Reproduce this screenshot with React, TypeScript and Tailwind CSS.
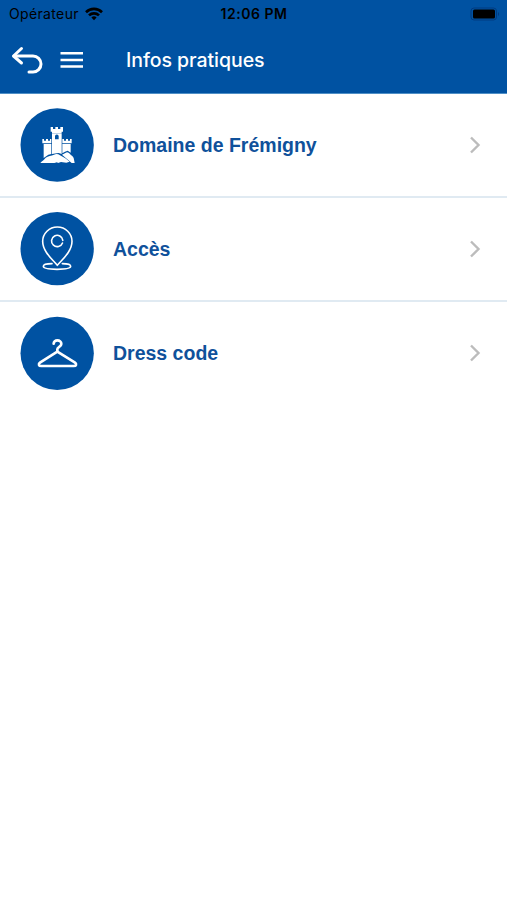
import type { ReactNode } from 'react';

interface MenuItem {
  label: string;
  icon: ReactNode;
}

const CastleIcon = () => (
  <svg viewBox="15 24 222 222" className="w-[74px] h-[74px] shrink-0" fill="#fff">
    <circle cx="126.5" cy="135" r="110" fill="#0052a2" />
    {/* Keep */}
    <path d="M107 81h7v6h7v-6h8v6h7v-6h8v14h-4v6h-29v-6h-4z" />
    <path fillRule="evenodd" d="M111 102h29v60l-9-3-6 1-14 2zM120 118h11v-9a5.5 5.5 0 0 0-11 0z" />
    {/* Side towers */}
    <path d="M82 117h5v5h6v-5h6v5h6v-5h4v13h-27zM86 132h23v30l-9 2-14 10z" />
    <path d="M142 117h5v5h6v-5h6v5h6v-5h5v13h-28zM142 132h25v26l-9-6-8 3-8 5z" />
    {/* Hills */}
    <path d="M76 189c6-8 11-8 16-16 7-6 17-5 25-9 6-3 13-2 18 2l16 9c5 3 9 7 13 10l-10 3-16-2-9 3-3-2-8 2z" />
    <path d="M141 164l10-5c6-5 9-2 14 3 3 5 9 6 11 12l3 15h-9l-15-13z" />
  </svg>
);

const PinIcon = () => (
  <svg
    viewBox="15 21 222 222"
    className="w-[74px] h-[74px] shrink-0"
    fill="none"
    stroke="#fff"
    strokeWidth="4.8"
    strokeLinecap="round"
    strokeLinejoin="round"
  >
    <circle cx="126.5" cy="131" r="110" fill="#0052a2" stroke="none" />
    <path d="M127 181C113 164 83 140 83 109a44 43 0 0 1 88 0c0 31-30 55-44 72z" />
    <path d="M143.5 106a17 17 0 1 0-1 8" />
    <path d="M111 176c-16 0-26 3-26 8 0 6 17 9 41 9s41-3 41-9c0-5-9-8-25-8" />
  </svg>
);

const HangerIcon = () => (
  <svg
    viewBox="15 18 222 222"
    className="w-[74px] h-[74px] shrink-0"
    fill="none"
    stroke="#fff"
    strokeWidth="8"
    strokeLinecap="round"
    strokeLinejoin="round"
  >
    <circle cx="126.5" cy="130" r="110" fill="#0052a2" stroke="none" />
    <path d="M116 101c0-6 5-10 11-10 7 0 12 5 12 11 0 9-12 8-12 16v7" />
    <path d="M127 125L76 157c-7 5-5 11 3 11h97c8 0 10-6 3-11z" />
  </svg>
);

const items: MenuItem[] = [
  { label: 'Domaine de Frémigny', icon: <CastleIcon /> },
  { label: 'Accès', icon: <PinIcon /> },
  { label: 'Dress code', icon: <HangerIcon /> },
];

const StatusBar = () => (
  <div className="grid grid-cols-3 items-center h-[27px] pl-[9px] pr-[7px] text-black">
    <div className="flex items-center gap-[6px]">
      <span className="font-[Inter,sans-serif] text-[14px] tracking-[0.35px]">Opérateur</span>
      <svg viewBox="0 0 18 14" className="w-[18px] h-[14px]" fill="none" stroke="#000" strokeWidth="2.6">
        <path d="M1 5.2a11.4 11.4 0 0 1 16 0" />
        <path d="M4 8.4a7.1 7.1 0 0 1 10 0" />
        <path d="M6.4 10.6a3.7 3.7 0 0 1 5.2 0L9 13.3z" fill="#000" stroke="none" />
      </svg>
    </div>
    <span className="pr-px text-center font-[Inter,sans-serif] text-[14px] font-semibold tracking-[0.55px] whitespace-nowrap">
      12:06 PM
    </span>
    <svg viewBox="0 0 30 14" className="w-[30px] h-[14px] justify-self-end">
      <rect x="1" y="1" width="25.5" height="12" rx="3" fill="none" stroke="#003b80" />
      <rect x="3" y="2.5" width="22" height="9" rx="1.5" fill="#000" />
      <path d="M28 5v4c1.4-.6 1.4-3.4 0-4z" fill="#003b80" />
    </svg>
  </div>
);

const Header = () => (
  <header className="h-[94px] bg-[#0052a2] border-b border-[#4f8fc6]">
    <StatusBar />
    <div className="flex items-center h-[66px] pl-[11px] text-white">
      <button aria-label="Retour">
        <svg
          viewBox="0 0 32 28"
          className="w-8 h-7"
          fill="none"
          stroke="currentColor"
          strokeWidth="3"
          strokeLinecap="round"
          strokeLinejoin="round"
        >
          <path d="M10.5 2.5L2.5 10L10.5 17" />
          <path d="M3 10h19a8 8 0 0 1 0 16h-4" />
        </svg>
      </button>
      <button aria-label="Menu" className="ml-[17px]">
        <svg viewBox="0 0 24 18" className="w-6 h-[18px]" stroke="currentColor" strokeWidth="2.6">
          <path d="M.5 2.3H23M.5 9H23M.5 15.5H23" />
        </svg>
      </button>
      <h1 className="ml-[42px] mt-[2px] font-[Inter,sans-serif] text-[19.5px] font-medium tracking-[-0.05px]">
        Infos pratiques
      </h1>
    </div>
  </header>
);

const MenuRow = ({ label, icon }: MenuItem) => (
  <li className="flex items-center h-[104px] pl-5 pr-[26px] border-b-2 border-[#e0eaf2] last:h-[102px] last:border-b-0">
    {icon}
    <span className="ml-[19px] flex-1 text-[19.5px] leading-[30px] font-bold text-[#0f519b]">{label}</span>
    <svg viewBox="0 0 12 18" className="w-3 h-[18px]" fill="none" stroke="#bcbcbc" strokeWidth="2.4">
      <path d="M2 1.5L9.5 9L2 16.5" />
    </svg>
  </li>
);

const App = () => (
  <div className="min-h-screen bg-white font-['Liberation_Sans',Arial,sans-serif]">
    <Header />
    <ul>
      {items.map((item) => (
        <MenuRow key={item.label} {...item} />
      ))}
    </ul>
  </div>
);

export default App;
